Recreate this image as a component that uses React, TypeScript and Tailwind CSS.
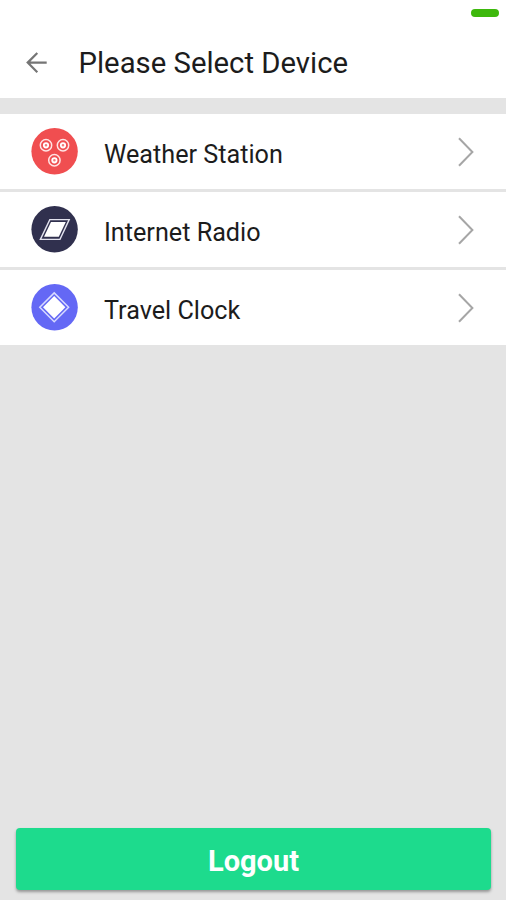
import type { ReactNode } from "react";

interface Device {
  name: string;
  color: string;
  icon: ReactNode;
}

const devices: Device[] = [
  {
    name: "Weather Station",
    color: "#f04e50",
    icon: (
      <>
        {[
          [15, 18],
          [32, 18],
          [23.4, 33],
        ].map(([cx, cy]) => (
          <g key={`${cx}-${cy}`}>
            <circle cx={cx} cy={cy} r="5.7" fill="none" stroke="#ffe3e3" strokeWidth="1.5" />
            <circle cx={cx} cy={cy} r="2.2" fill="#f4797a" stroke="#fff" strokeWidth="1.8" />
          </g>
        ))}
      </>
    ),
  },
  {
    name: "Internet Radio",
    color: "#30304e",
    icon: (
      <>
        <path d="M18.8 14.3h19.4l-9.2 19.8H9.4z" fill="none" stroke="#e2e2ee" strokeWidth="1.4" />
        <path d="M20 16.7h14.8l-7 14.8H13z" fill="#fff" />
      </>
    ),
  },
  {
    name: "Travel Clock",
    color: "#6468f5",
    icon: (
      <>
        <path d="M23.2 9.6 37.6 24 23.2 38.4 8.8 24z" fill="none" stroke="#d8daff" strokeWidth="1.5" />
        <path d="M23.2 12.8 34.4 24 23.2 35.2 12 24z" fill="#fff" />
      </>
    ),
  },
];

function Header() {
  return (
    <header className="flex h-[98px] shrink-0 flex-col bg-white">
      <div className="flex h-7 justify-end pr-[7px] pt-[9px]">
        <span className="h-2 w-7 rounded-full bg-[#3db80c]" />
      </div>
      <div className="flex h-[70px] items-center">
        <button type="button" aria-label="Back" className="ml-[26px]">
          <svg
            className="h-[22px] w-[22px]"
            viewBox="0 0 22 22"
            fill="none"
            stroke="#757575"
            strokeWidth="2.2"
          >
            <path d="M20.7 10.6H2M11.3 1 1.7 10.6l9.6 9.6" />
          </svg>
        </button>
        <h1 className="ml-[30.5px] whitespace-nowrap pt-[2px] text-[29.3px] leading-none text-[#1c1c1c]">
          Please Select Device
        </h1>
      </div>
    </header>
  );
}

function DeviceRow({ name, color, icon }: Device) {
  return (
    <li className="flex h-[75px] items-center bg-white pl-[31px] pr-8">
      <svg className="h-12 w-12" viewBox="0 0.7 48 48">
        <circle cx="23.6" cy="24" r="23.2" fill={color} />
        {icon}
      </svg>
      <span className="ml-[25px] flex-1 pt-[6px] text-[25.2px] leading-none text-[#1c1c1c]">
        {name}
      </span>
      <svg
        className="h-[30px] w-4"
        viewBox="0 0 16 30"
        fill="none"
        stroke="#a6a6a6"
        strokeWidth="2"
      >
        <path d="M1 1.3 14.4 15 1 28.7" />
      </svg>
    </li>
  );
}

export default function App() {
  return (
    <div className="flex h-[900px] w-[506px] flex-col bg-[#e4e4e4] font-['Roboto',sans-serif]">
      <Header />
      <ul className="mt-4 flex flex-col gap-[3px]">
        {devices.map((device) => (
          <DeviceRow key={device.name} {...device} />
        ))}
      </ul>
      <button
        type="button"
        className="mx-4 mb-[10px] mt-auto h-[62px] w-[475px] rounded-[4px] bg-[#1ddb8d] pt-[5px] text-[29px] font-bold text-white shadow-[0_2px_3px_rgba(0,0,0,0.35)]"
      >
        Logout
      </button>
    </div>
  );
}
